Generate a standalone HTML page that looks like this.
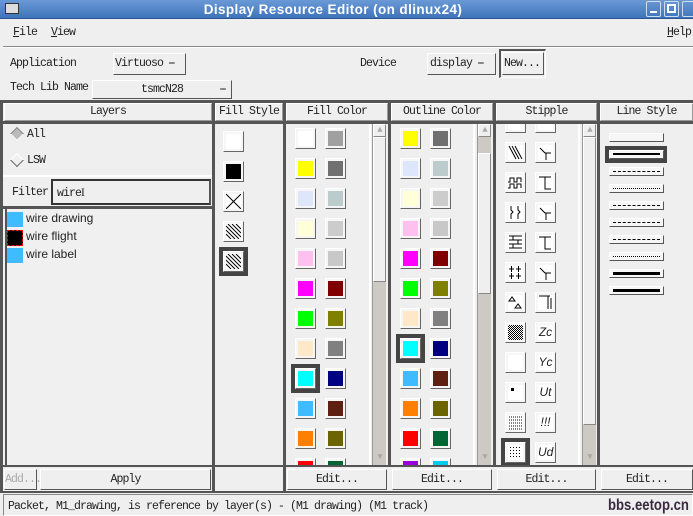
<!DOCTYPE html>
<html><head><style>
*{margin:0;padding:0;box-sizing:border-box}
body{width:693px;height:516px;position:relative;overflow:hidden;background:#efefef;font-family:"Liberation Mono",monospace;font-size:11.5px;letter-spacing:-0.9px;color:#222}
.a{position:absolute}
.t{position:absolute;white-space:nowrap;line-height:12px}
.btn{position:absolute;border:1px solid;border-color:#fff #555 #555 #fff;background:#efefef;text-align:center;white-space:nowrap}
.dk{position:absolute;background:#555}
.hd{position:absolute;top:103px;height:18px;border:1px solid;border-color:#fff #999 #999 #fff;text-align:center;line-height:16px}
.box{position:absolute;overflow:hidden}
.s{position:absolute;width:21px;height:21px;border:1px solid;border-color:#fff #666 #666 #fff;background:#f6f6f6;padding:2px}
.s i{display:block;width:100%;height:100%}
.sel{position:absolute;width:29px;height:29px;border:4px solid #444}
.sb{position:absolute;width:14px;background:#cdc9c3;border-left:1px solid #999}
.th{position:absolute;left:0;width:13px;background:#efefef;border:1px solid;border-color:#fff #888 #888 #fff}
.ls{position:absolute;left:609px;width:55px;height:9px;border:1px solid;border-color:#fff #555 #555 #fff;background:#f6f6f6}
.ls b{position:absolute;left:3px;right:3px;top:3px;border-top:1px solid #000}
.u{text-decoration:underline}
</style></head><body>
<!-- title bar -->
<div class="a" style="left:0;top:0;width:693px;height:19px;background:linear-gradient(#6a9ad6,#3f74bb);border-bottom:1px solid #2c5590"></div>
<div class="a" style="left:5px;top:3px;width:14px;height:11px;background:#ddd;border:1px solid #333"></div>
<div class="t" style="left:0;width:666px;text-align:center;top:2px;color:#fff;font-family:'Liberation Sans',sans-serif;font-weight:bold;font-size:13.5px;letter-spacing:0.4px;line-height:15px">Display Resource Editor (on dlinux24)</div>
<div class="a" style="left:646px;top:1px;width:15px;height:16px;border:1px solid #cde;border-radius:2px"></div>
<div class="a" style="left:650px;top:11px;width:7px;height:2px;background:#fff"></div>
<div class="a" style="left:664px;top:1px;width:15px;height:16px;border:1px solid #cde;border-radius:2px"></div>
<div class="a" style="left:667px;top:4px;width:9px;height:9px;border:2px solid #fff"></div>
<div class="a" style="left:682px;top:1px;width:15px;height:16px;border:1px solid #cde;border-radius:2px"></div>
<!-- menu -->
<div class="t" style="left:13px;top:27px"><span class="u">F</span>ile</div>
<div class="t" style="left:51px;top:27px"><span class="u">V</span>iew</div>
<div class="t" style="left:667px;top:27px"><span class="u">H</span>elp</div>
<div class="a" style="left:3px;top:46px;width:690px;height:2px;background:#888;border-bottom:1px solid #fff"></div>
<!-- row1 -->
<div class="t" style="left:10px;top:58px">Application</div>
<div class="btn" style="left:113px;top:53px;width:73px;height:22px;line-height:20px;text-align:left;padding-left:1px">Virtuoso ⎯</div>
<div class="t" style="left:360px;top:58px">Device</div>
<div class="btn" style="left:427px;top:53px;width:69px;height:22px;line-height:20px;text-align:left;padding-left:2px">display ⎯</div>
<div class="a" style="left:499px;top:49px;width:47px;height:29px;border:1px solid;border-color:#555 #fff #fff #555;border-width:2px 1px 1px 2px"></div>
<div class="btn" style="left:502px;top:52px;width:42px;height:23px;line-height:21px;text-align:left;padding-left:1px">New...</div>
<!-- row2 -->
<div class="t" style="left:10px;top:82px">Tech Lib Name</div>
<div class="btn" style="left:92px;top:80px;width:140px;height:19px;line-height:17px">tsmcN28<span style="position:absolute;right:6px">⎯</span></div>
<!-- main frame lines -->
<div class="dk" style="left:0;top:100px;width:693px;height:3px"></div>
<div class="dk" style="left:0;top:100px;width:3px;height:393px"></div>
<div class="dk" style="left:212px;top:100px;width:3px;height:393px"></div>
<div class="dk" style="left:283px;top:100px;width:3px;height:393px"></div>
<div class="dk" style="left:388px;top:100px;width:3px;height:366px"></div>
<div class="dk" style="left:493px;top:100px;width:3px;height:366px"></div>
<div class="dk" style="left:597px;top:100px;width:3px;height:366px"></div>
<div class="dk" style="left:3px;top:121px;width:690px;height:3px"></div>
<div class="dk" style="left:0;top:465px;width:693px;height:2px"></div>
<div class="dk" style="left:0;top:491px;width:693px;height:2px"></div>
<div class="dk" style="left:3px;top:206px;width:210px;height:3px"></div>
<!-- headers -->
<div class="hd" style="left:4px;width:208px">Layers</div>
<div class="hd" style="left:215px;width:68px">Fill Style</div>
<div class="hd" style="left:286px;width:102px">Fill Color</div>
<div class="hd" style="left:391px;width:102px">Outline Color</div>
<div class="hd" style="left:496px;width:101px">Stipple</div>
<div class="hd" style="left:600px;width:93px">Line Style</div>
<!-- left panel -->
<div class="a" style="left:3px;top:124px;width:209px;height:51px;background:#efefef"></div>
<div class="a" style="left:12px;top:129px;width:10px;height:10px;background:#bbb;transform:rotate(45deg);border:1px solid;border-color:#888 #fff #fff #888"></div>
<div class="t" style="left:27px;top:129px">All</div>
<div class="a" style="left:12px;top:155px;width:10px;height:10px;transform:rotate(45deg);border:1px solid;border-color:#fff #666 #666 #fff"></div>
<div class="t" style="left:27px;top:155px">LSW</div>
<div class="a" style="left:3px;top:175px;width:209px;height:2px;background:#fff"></div>
<div class="t" style="left:12px;top:187px">Filter</div>
<div class="a" style="left:51px;top:179px;width:160px;height:26px;border:2px solid #333;border-right-color:#555;background:#efefef"></div>
<div class="t" style="left:57px;top:187px">wire<span style="font-family:'Liberation Serif';letter-spacing:0">I</span></div>
<div class="a" style="left:5px;top:209px;width:205px;height:256px;background:#f0f0f0;border-left:2px solid #555"></div>
<div class="a" style="left:7px;top:212px;width:16px;height:15px;background:#3ebcff"></div>
<div class="a" style="left:7px;top:230px;width:16px;height:16px;background:#000;border:1px dashed #f00"></div>
<div class="a" style="left:7px;top:248px;width:16px;height:15px;background:#3ebcff"></div>
<div class="t" style="left:26px;top:212px;font-family:'Liberation Sans',sans-serif;font-size:12px;letter-spacing:0">wire drawing</div>
<div class="t" style="left:26px;top:230px;font-family:'Liberation Sans',sans-serif;font-size:12px;letter-spacing:0">wire flight</div>
<div class="t" style="left:26px;top:248px;font-family:'Liberation Sans',sans-serif;font-size:12px;letter-spacing:0">wire label</div>
<div class="btn" style="left:4px;top:469px;width:33px;height:21px;line-height:19px;color:#aaa">Add...</div>
<div class="btn" style="left:40px;top:469px;width:171px;height:21px;line-height:19px">Apply</div>
<!-- fill style -->
<div class="s" style="left:223px;top:131px"><i style="background:#fff"></i></div>
<div class="s" style="left:223px;top:161px"><i style="background:#000"></i></div>
<div class="s" style="left:223px;top:191px"><i style="background:#fff"><svg width="15" height="15"><path d="M0 0L15 15M15 0L0 15" stroke="#000"/></svg></i></div>
<div class="s" style="left:223px;top:221px"><i style="background:#fff"><svg width="15" height="15"><path d="M2 0L15 13M0 2L13 15M6 0L15 9M0 6L9 15M10 0L15 5M0 10L5 15" stroke="#000"/></svg></i></div>
<div class="sel" style="left:219px;top:247px"></div>
<div class="s" style="left:223px;top:251px"><i style="background:#fff"><svg width="15" height="15"><path d="M2 0L15 13M0 2L13 15M6 0L15 9M0 6L9 15M10 0L15 5M0 10L5 15" stroke="#000"/></svg></i></div>
<!-- fill color -->
<div class="box" style="left:288px;top:124px;width:83px;height:341px;border-right:2px solid #fff">
<div class="s" style="left:7px;top:4px"><i style="background:#fff"></i></div><div class="s" style="left:37px;top:4px"><i style="background:#a0a0a0"></i></div>
<div class="s" style="left:7px;top:34px"><i style="background:#ff0"></i></div><div class="s" style="left:37px;top:34px"><i style="background:#707070"></i></div>
<div class="s" style="left:7px;top:64px"><i style="background:#dde6fb"></i></div><div class="s" style="left:37px;top:64px"><i style="background:#bccccc"></i></div>
<div class="s" style="left:7px;top:94px"><i style="background:#ffffd8"></i></div><div class="s" style="left:37px;top:94px"><i style="background:#ccc"></i></div>
<div class="s" style="left:7px;top:124px"><i style="background:#ffc0f0"></i></div><div class="s" style="left:37px;top:124px"><i style="background:#c8c8c8"></i></div>
<div class="s" style="left:7px;top:154px"><i style="background:#f0f"></i></div><div class="s" style="left:37px;top:154px"><i style="background:#800000"></i></div>
<div class="s" style="left:7px;top:184px"><i style="background:#0f0"></i></div><div class="s" style="left:37px;top:184px"><i style="background:#808000"></i></div>
<div class="s" style="left:7px;top:214px"><i style="background:#ffe8c8"></i></div><div class="s" style="left:37px;top:214px"><i style="background:#808080"></i></div>
<div class="sel" style="left:3px;top:240px"></div>
<div class="s" style="left:7px;top:244px"><i style="background:#0ff"></i></div><div class="s" style="left:37px;top:244px"><i style="background:#000080"></i></div>
<div class="s" style="left:7px;top:274px"><i style="background:#3ebcff"></i></div><div class="s" style="left:37px;top:274px"><i style="background:#5e2010"></i></div>
<div class="s" style="left:7px;top:304px"><i style="background:#ff8000"></i></div><div class="s" style="left:37px;top:304px"><i style="background:#6c6400"></i></div>
<div class="s" style="left:7px;top:334px"><i style="background:#f00"></i></div><div class="s" style="left:37px;top:334px"><i style="background:#006633"></i></div>
</div>
<div class="sb" style="left:372px;top:124px;height:341px"><div class="th" style="top:0;height:13px;font-size:9px;line-height:11px;color:#aaa;text-align:center">▲</div><div class="th" style="top:13px;height:145px"></div><div class="a" style="left:0;bottom:0;width:13px;height:13px;font-size:9px;color:#aaa;text-align:center">▼</div></div>
<!-- outline color -->
<div class="box" style="left:392px;top:124px;width:83px;height:341px;border-right:2px solid #fff">
<div class="s" style="left:8px;top:4px"><i style="background:#ff0"></i></div><div class="s" style="left:38px;top:4px"><i style="background:#707070"></i></div>
<div class="s" style="left:8px;top:34px"><i style="background:#dde6fb"></i></div><div class="s" style="left:38px;top:34px"><i style="background:#bccccc"></i></div>
<div class="s" style="left:8px;top:64px"><i style="background:#ffffd8"></i></div><div class="s" style="left:38px;top:64px"><i style="background:#ccc"></i></div>
<div class="s" style="left:8px;top:94px"><i style="background:#ffc0f0"></i></div><div class="s" style="left:38px;top:94px"><i style="background:#c8c8c8"></i></div>
<div class="s" style="left:8px;top:124px"><i style="background:#f0f"></i></div><div class="s" style="left:38px;top:124px"><i style="background:#800000"></i></div>
<div class="s" style="left:8px;top:154px"><i style="background:#0f0"></i></div><div class="s" style="left:38px;top:154px"><i style="background:#808000"></i></div>
<div class="s" style="left:8px;top:184px"><i style="background:#ffe8c8"></i></div><div class="s" style="left:38px;top:184px"><i style="background:#808080"></i></div>
<div class="sel" style="left:4px;top:210px"></div>
<div class="s" style="left:8px;top:214px"><i style="background:#0ff"></i></div><div class="s" style="left:38px;top:214px"><i style="background:#000080"></i></div>
<div class="s" style="left:8px;top:244px"><i style="background:#3ebcff"></i></div><div class="s" style="left:38px;top:244px"><i style="background:#5e2010"></i></div>
<div class="s" style="left:8px;top:274px"><i style="background:#ff8000"></i></div><div class="s" style="left:38px;top:274px"><i style="background:#6c6400"></i></div>
<div class="s" style="left:8px;top:304px"><i style="background:#f00"></i></div><div class="s" style="left:38px;top:304px"><i style="background:#006633"></i></div>
<div class="s" style="left:8px;top:334px"><i style="background:#9900dd"></i></div><div class="s" style="left:38px;top:334px"><i style="background:#00ccee"></i></div>
</div>
<div class="sb" style="left:477px;top:124px;height:341px"><div class="th" style="top:0;height:13px;font-size:9px;line-height:11px;color:#aaa;text-align:center">▲</div><div class="th" style="top:29px;height:141px"></div><div class="a" style="left:0;bottom:0;width:13px;height:13px;font-size:9px;color:#aaa;text-align:center">▼</div></div>
<!-- stipple -->
<div class="box" style="left:497px;top:124px;width:83px;height:341px;border-right:2px solid #fff;font-family:'Liberation Sans',sans-serif;letter-spacing:0;font-size:12px">
<div class="s" style="left:8px;top:-12px"><i style="background:#fff"></i></div><div class="s" style="left:38px;top:-12px"><i style="background:#fff"></i></div>
<div class="s" style="left:8px;top:18px"><i style="background:#fff"><svg width="15" height="15"><path d="M1 1L8 14M4 1L11 14M7 1L14 14" stroke="#000"/></svg></i></div>
<div class="s" style="left:38px;top:18px"><i style="background:#fff"><svg width="15" height="15"><path d="M2 3L7 8H13M8 8V15" stroke="#000" fill="none"/></svg></i></div>
<div class="s" style="left:8px;top:48px"><i style="background:#fff"><svg width="15" height="15"><path d="M0 7H2V3H6V7H9V3H13V7M0 13H2V9H6V13H9V9H13V13" stroke="#000" fill="none"/></svg></i></div>
<div class="s" style="left:38px;top:48px"><i style="background:#fff"><svg width="15" height="15"><path d="M1 2H13M7 2V14H13" stroke="#000" fill="none"/></svg></i></div>
<div class="s" style="left:8px;top:78px"><i style="background:#fff"><svg width="15" height="15"><path d="M3 1V5L5 7L3 9V14M10 1V5L12 7L10 9V14" stroke="#000" fill="none"/></svg></i></div>
<div class="s" style="left:38px;top:78px"><i style="background:#fff"><svg width="15" height="15"><path d="M2 3L7 8H13M8 8V15" stroke="#000" fill="none"/></svg></i></div>
<div class="s" style="left:8px;top:108px"><i style="background:#fff"><svg width="15" height="15"><path d="M1 1H14M1 5H14M1 9H14M1 13H14M5 1V5M10 5V9M5 9V13" stroke="#000" fill="none"/></svg></i></div>
<div class="s" style="left:38px;top:108px"><i style="background:#fff"><svg width="15" height="15"><path d="M1 2H13M7 2V14H13" stroke="#000" fill="none"/></svg></i></div>
<div class="s" style="left:8px;top:138px"><i style="background:#fff"><svg width="15" height="15"><path d="M1 4H6M3.5 1V7M8 4H13M10.5 1V7M1 11H6M3.5 8V14M8 11H13M10.5 8V14" stroke="#000"/></svg></i></div>
<div class="s" style="left:38px;top:138px"><i style="background:#fff"><svg width="15" height="15"><path d="M2 3L7 8H13M8 8V15" stroke="#000" fill="none"/></svg></i></div>
<div class="s" style="left:8px;top:168px"><i style="background:#fff"><svg width="15" height="15"><path d="M1 6L4 2L7 6ZM7 13L10 9L13 13Z" stroke="#000" fill="none"/></svg></i></div>
<div class="s" style="left:38px;top:168px"><i style="background:#fff"><svg width="15" height="15"><path d="M1 1H12M10 1V14M13 3V14" stroke="#000" fill="none"/></svg></i></div>
<div class="s" style="left:8px;top:198px"><i style="background:repeating-conic-gradient(#000 0 25%,#fff 0 50%) 0 0/2px 2px"></i></div>
<div class="s" style="left:38px;top:198px"><i style="background:#fff;line-height:15px;text-align:center">Zc</i></div>
<div class="s" style="left:8px;top:228px"><i style="background:#fff"></i></div>
<div class="s" style="left:38px;top:228px"><i style="background:#fff;line-height:15px;text-align:center">Yc</i></div>
<div class="s" style="left:8px;top:258px"><i style="background:#fff"><svg width="15" height="15"><rect x="3" y="3" width="3" height="3"/></svg></i></div>
<div class="s" style="left:38px;top:258px"><i style="background:#fff;line-height:15px;text-align:center">Ut</i></div>
<div class="s" style="left:8px;top:288px"><i style="background:#fff"><svg width="15" height="15"><path d="M1 2H14M1 5H14M1 8H14M1 11H14M1 14H14" stroke="#000" stroke-dasharray="1 1"/></svg></i></div>
<div class="s" style="left:38px;top:288px"><i style="background:#fff;line-height:15px;text-align:center">!!!</i></div>
<div class="sel" style="left:4px;top:314px"></div>
<div class="s" style="left:8px;top:318px"><i style="background:#fff"><svg width="15" height="15"><path d="M2 2.5H14M2 5.5H14M2 8.5H14M2 11.5H14" stroke="#000" stroke-dasharray="1 2"/></svg></i></div>
<div class="s" style="left:38px;top:318px"><i style="background:#fff;line-height:15px;text-align:center">Ud</i></div>
</div>
<div class="sb" style="left:582px;top:124px;height:341px"><div class="th" style="top:0;height:13px;font-size:9px;line-height:11px;color:#aaa;text-align:center">▲</div><div class="th" style="top:13px;height:288px"></div><div class="a" style="left:0;bottom:0;width:13px;height:13px;font-size:9px;color:#aaa;text-align:center">▼</div></div>
<!-- line style -->
<div class="ls" style="top:133px"></div>
<div class="a" style="left:605px;top:146px;width:62px;height:17px;border:4px solid #444"></div>
<div class="ls" style="top:150px"><b style="border-top-width:2px;top:2px"></b></div>
<div class="ls" style="top:167px"><b style="border-top-style:dashed"></b></div>
<div class="ls" style="top:184px"><b style="border-top-style:dotted"></b></div>
<div class="ls" style="top:201px"><b style="border-top-style:dashed"></b></div>
<div class="ls" style="top:218px"><b style="border-top-style:dashed"></b></div>
<div class="ls" style="top:235px"><b style="border-top-style:dashed"></b></div>
<div class="ls" style="top:252px"><b style="border-top-style:dotted"></b></div>
<div class="ls" style="top:269px"><b style="border-top-width:3px;top:2px"></b></div>
<div class="ls" style="top:286px"><b style="border-top-width:3px;top:2px"></b></div>
<!-- edit buttons -->
<div class="btn" style="left:287px;top:469px;width:100px;height:21px;line-height:19px">Edit...</div>
<div class="btn" style="left:392px;top:469px;width:100px;height:21px;line-height:19px">Edit...</div>
<div class="btn" style="left:497px;top:469px;width:99px;height:21px;line-height:19px">Edit...</div>
<div class="btn" style="left:601px;top:469px;width:92px;height:21px;line-height:19px">Edit...</div>
<!-- status -->
<div class="a" style="left:3px;top:494px;width:690px;height:22px;border:1px solid;border-color:#888 #fff #fff #888"></div>
<div class="t" style="left:8px;top:501px">Packet, M1_drawing, is reference by layer(s) - (M1 drawing) (M1 track)</div>
<div class="t" style="left:608px;top:497px;font-family:'Liberation Sans',sans-serif;font-weight:bold;font-size:16px;letter-spacing:0;color:#3a2a40;line-height:17px;transform:scaleX(0.82);transform-origin:0 0">bbs.eetop.cn</div>
</body></html>
